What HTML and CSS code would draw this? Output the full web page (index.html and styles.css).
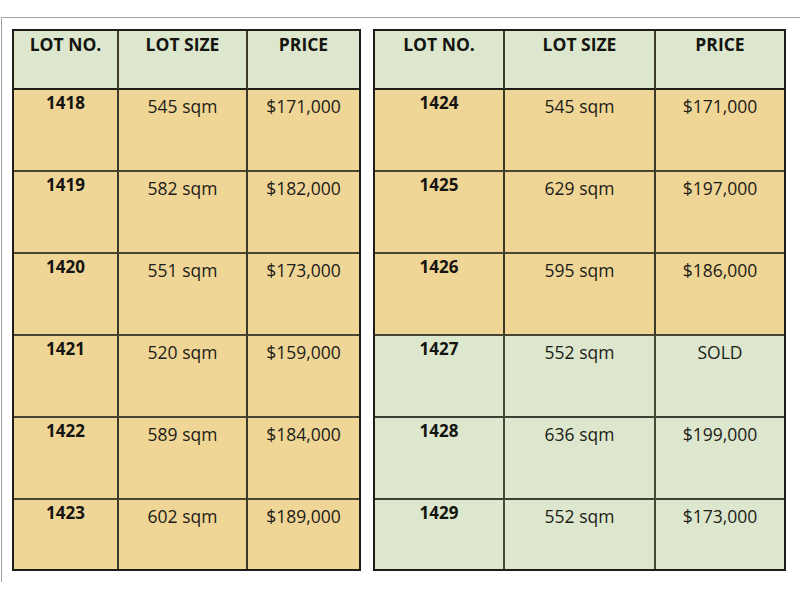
FILE: index.html
```html
<!DOCTYPE html>
<html>
<head>
<meta charset="utf-8">
<link rel="stylesheet" href="styles.css">
</head>
<body>
<div class="frame">
  <div class="sheet">
    <div class="lots lots-left">
      <div class="cell head">LOT NO.</div>
      <div class="cell head">LOT SIZE</div>
      <div class="cell head">PRICE</div>

      <div class="cell lot avail">1418</div>
      <div class="cell avail">545 sqm</div>
      <div class="cell avail">$171,000</div>

      <div class="cell lot avail">1419</div>
      <div class="cell avail">582 sqm</div>
      <div class="cell avail">$182,000</div>

      <div class="cell lot avail">1420</div>
      <div class="cell avail">551 sqm</div>
      <div class="cell avail">$173,000</div>

      <div class="cell lot avail">1421</div>
      <div class="cell avail">520 sqm</div>
      <div class="cell avail">$159,000</div>

      <div class="cell lot avail">1422</div>
      <div class="cell avail">589 sqm</div>
      <div class="cell avail">$184,000</div>

      <div class="cell lot avail last">1423</div>
      <div class="cell avail last">602 sqm</div>
      <div class="cell avail last">$189,000</div>
    </div>

    <div class="lots lots-right">
      <div class="cell head">LOT NO.</div>
      <div class="cell head">LOT SIZE</div>
      <div class="cell head">PRICE</div>

      <div class="cell lot avail">1424</div>
      <div class="cell avail">545 sqm</div>
      <div class="cell avail">$171,000</div>

      <div class="cell lot avail">1425</div>
      <div class="cell avail">629 sqm</div>
      <div class="cell avail">$197,000</div>

      <div class="cell lot avail">1426</div>
      <div class="cell avail">595 sqm</div>
      <div class="cell avail">$186,000</div>

      <div class="cell lot green">1427</div>
      <div class="cell green">552 sqm</div>
      <div class="cell green">SOLD</div>

      <div class="cell lot green">1428</div>
      <div class="cell green">636 sqm</div>
      <div class="cell green">$199,000</div>

      <div class="cell lot green last">1429</div>
      <div class="cell green last">552 sqm</div>
      <div class="cell green last">$173,000</div>
    </div>
  </div>
</div>
</body>
</html>
```

FILE: styles.css
```css
html, body {
  margin: 0;
  padding: 0;
  background: #ffffff;
}

body {
  width: 800px;
  height: 600px;
  overflow: hidden;
  font-family: "Open Sans", "Noto Sans", sans-serif;
  color: #1c1c18;
}

.frame {
  margin-top: 17px;
  margin-left: 1px;
  height: 565px;
  border-top: 1px solid #a2a2a2;
  border-left: 1px solid #a2a2a2;
  box-sizing: border-box;
}

.sheet {
  display: flex;
  align-items: flex-start;
  gap: 12px;
  padding: 11px 0 0 10px;
}

.lots {
  display: grid;
  grid-template-rows: 59px repeat(5, 82px) 69px;
  border: 2px solid #1e1e18;
  background: #dce7cd;
}

.lots-left {
  grid-template-columns: 105px 129px 111px;
}

.lots-right {
  grid-template-columns: 130px 151px 128px;
}

.cell {
  box-sizing: border-box;
  border-right: 2px solid #3e3a2a;
  border-bottom: 2px solid #4a4432;
  text-align: center;
  font-size: 17.5px;
  line-height: 22px;
  padding-top: 5px;
  white-space: nowrap;
}

.cell:nth-child(3n) {
  border-right: none;
}

.cell.last {
  border-bottom: none;
}

.head {
  background: #dce7cd;
  font-weight: 700;
  font-size: 17.5px;
  line-height: 20px;
  padding-top: 3px;
  color: #141410;
  border-bottom-color: #1e1e18;
}

.lot {
  font-weight: 700;
  font-size: 17px;
  padding-top: 2px;
  color: #141410;
}

.avail {
  background: #efd596;
}

.green {
  background: #dce7cd;
  border-right-color: #424a38;
  border-bottom-color: #3c4232;
}
```
